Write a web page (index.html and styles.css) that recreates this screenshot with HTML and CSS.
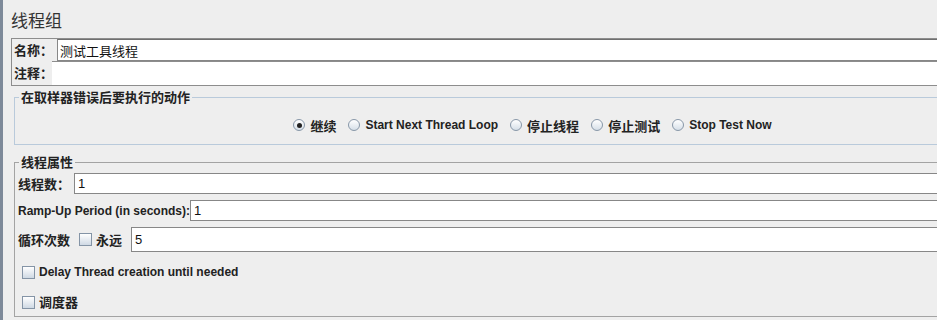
FILE: index.html
```html
<!DOCTYPE html>
<html lang="zh-CN">
<head>
    <meta charset="UTF-8">
    <title>线程组</title>
    <link rel="stylesheet" href="styles.css">
</head>
<body>
    <div class="app">
        <!-- Header -->
        <h1 class="title">线程组</h1>

        <!-- Name / comment -->
        <div class="name-panel">
            <div class="name-row">
                <label class="label cn label-name">名称：</label>
                <input class="field field-name cn" type="text" value="测试工具线程">
            </div>
            <div class="name-row">
                <label class="label cn label-comment">注释：</label>
                <input class="field field-comment" type="text" value="">
            </div>
        </div>

        <!-- Action after sampler error -->
        <fieldset class="group group-action">
            <legend class="cn">在取样器错误后要执行的动作</legend>
            <div class="radio-row">
                <label class="radio-item"><span class="radio is-checked"></span><span class="cn">继续</span></label>
                <label class="radio-item"><span class="radio"></span>Start Next Thread Loop</label>
                <label class="radio-item"><span class="radio"></span><span class="cn">停止线程</span></label>
                <label class="radio-item"><span class="radio"></span><span class="cn">停止测试</span></label>
                <label class="radio-item"><span class="radio"></span>Stop Test Now</label>
            </div>
        </fieldset>

        <!-- Thread properties -->
        <fieldset class="group group-props">
            <legend class="cn">线程属性</legend>
            <div class="prop-row">
                <label class="label cn label-threads">线程数：</label>
                <input class="field" type="text" value="1">
            </div>
            <div class="prop-row">
                <label class="label label-ramp">Ramp-Up Period (in seconds):</label>
                <input class="field" type="text" value="1">
            </div>
            <div class="prop-row prop-loop">
                <label class="label cn label-loop">循环次数</label>
                <span class="checkbox"></span>
                <label class="label cn label-forever">永远</label>
                <input class="field" type="text" value="5">
            </div>
            <div class="check-row">
                <span class="checkbox"></span>
                <label class="label">Delay Thread creation until needed</label>
            </div>
            <div class="check-row">
                <span class="checkbox"></span>
                <label class="label cn">调度器</label>
            </div>
        </fieldset>
    </div>
</body>
</html>
```

FILE: styles.css
```css
/* Base */
* {
    margin: 0;
    padding: 0;
    box-sizing: border-box;
}

html, body {
    height: 320px;
    overflow: hidden;
}

body {
    background-color: #eeeeee;
    font-family: "Liberation Sans", "Noto Sans CJK SC", sans-serif;
    font-size: 12px;
    color: #222;
}

/* The panel is wider than the window, so the right side is cut off */
.app {
    width: 1048px;
    height: 320px;
    border-left: 3px solid #7d8999;
    padding-left: 8px;
}

.cn {
    font-family: "Noto Sans CJK SC", "Liberation Sans", sans-serif;
    font-size: 13px;
}

.title {
    font-family: "Noto Sans CJK SC", sans-serif;
    font-size: 17px;
    font-weight: normal;
    line-height: 20px;
    color: #333;
    padding-top: 10px;
    margin-bottom: 8px;
}

.label {
    font-weight: bold;
    white-space: nowrap;
    line-height: 16px;
}

.field {
    flex: 1;
    border: 1px solid #878787;
    background: #fff;
    font-family: "Liberation Sans", "Noto Sans CJK SC", sans-serif;
    font-size: 13px;
    color: #111;
    padding: 0 3px;
    outline: none;
}

/* Name panel */
.name-panel {
    border: 1px solid #8d8d8d;
    border-right: none;
}

.name-row {
    display: flex;
    align-items: center;
}

.name-row .label {
    padding-left: 2px;
    flex: none;
}

.label-name {
    width: 45px;
}

.label-comment {
    width: 40px;
}

.field-name {
    height: 22px;
    padding-left: 2px;
    border-top-color: #6f6f6f;
}

.field-comment {
    height: 24px;
    border: none;
    border-top: 1px solid #8d8d8d;
}

/* Titled groups */
.group {
    margin-left: 3px;
    padding: 0 0 0 3px;
}

.group legend {
    font-weight: bold;
    line-height: 16px;
    margin-left: 1px;
    padding: 0 2px;
}

.group-action {
    margin-top: 3px;
    border: 1px solid #b9cadb;
    padding-bottom: 11px;
}

.radio-row {
    display: flex;
    justify-content: center;
    align-items: center;
    gap: 12px;
    margin-top: 12px;
    height: 16px;
    font-weight: bold;
}

.radio-item {
    display: flex;
    align-items: center;
    gap: 5px;
}

.radio {
    width: 12px;
    height: 12px;
    border: 1px solid #8797a8;
    border-radius: 50%;
    background: linear-gradient(#ffffff, #d6dfe8);
    display: flex;
    align-items: center;
    justify-content: center;
}

.radio.is-checked::after {
    content: "";
    width: 5px;
    height: 5px;
    border-radius: 50%;
    background: #222;
}

.checkbox {
    width: 13px;
    height: 13px;
    border: 1px solid #8494a6;
    background: linear-gradient(#ffffff, #cfd9e4);
    flex: none;
}

/* Thread properties */
.group-props {
    margin-top: 9px;
    border: 1px solid #a3a3a3;
    padding-bottom: 2px;
}

.prop-row {
    display: flex;
    align-items: center;
    margin-top: 6px;
}

.prop-row:first-of-type {
    margin-top: 3px;
}

.prop-row .field {
    height: 21px;
}

.label-threads {
    width: 56px;
}

.label-ramp {
    width: 172px;
}

.prop-loop .field {
    height: 25px;
}

.label-loop {
    width: 61px;
}

.label-forever {
    margin-left: 4px;
    width: 35px;
}

.check-row {
    display: flex;
    align-items: center;
    gap: 4px;
    height: 24px;
    margin-top: 6px;
    padding-left: 4px;
}

.check-row:nth-of-type(4) {
    margin-top: 8px;
}
```
